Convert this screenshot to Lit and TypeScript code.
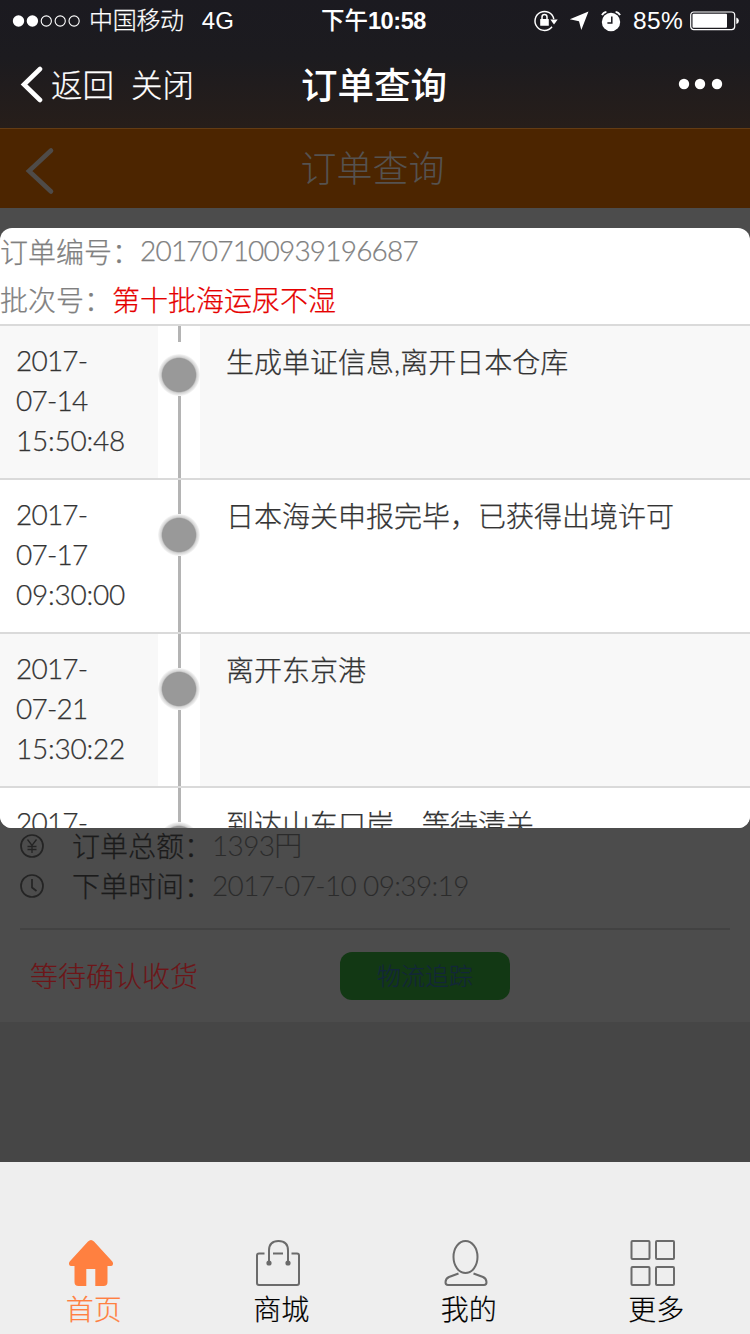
import { LitElement, html, css, svg } from "lit";
import { customElement, property } from "lit/decorators.js";

interface TrackEvent {
  date: string[];
  text: string;
}

const EVENTS: TrackEvent[] = [
  { date: ["2017-", "07-14", "15:50:48"], text: "生成单证信息,离开日本仓库" },
  { date: ["2017-", "07-17", "09:30:00"], text: "日本海关申报完毕，已获得出境许可" },
  { date: ["2017-", "07-21", "15:30:22"], text: "离开东京港" },
  { date: ["2017-"], text: "到达山东口岸，等待清关" },
];

@customElement("status-bar")
class StatusBar extends LitElement {
  static styles = css`
    :host {
      display: grid;
      grid-template-columns: 1fr auto 1fr;
      align-items: center;
      height: 41px;
      color: #fff;
      font: 24px/40px "Liberation Sans", "Noto Sans CJK SC", sans-serif;
      white-space: nowrap;
    }
    .left, .right { display: flex; align-items: center; }
    .left { padding-left: 12px; }
    .signal { width: 70px; height: 14px; margin-right: 7px; }
    .carrier { font-weight: 300; letter-spacing: -0.3px; padding-top: 1px; -webkit-text-stroke: 0.25px; }
    .net { margin-left: 18px; }
    .time { font-weight: 500; font-size: 23.5px; margin-right: 3px; }
    .digits { font-weight: 700; letter-spacing: -0.4px; }
    .right { justify-content: flex-end; padding-right: 10px; }
    .lock { width: 26px; height: 24px; margin-right: 10px; }
    .arrow { width: 20px; height: 20px; margin-right: 11px; }
    .alarm { width: 22px; height: 22px; margin-right: 11px; }
    .pct { font-size: 24.5px; letter-spacing: 0.3px; }
    .battery { width: 50px; height: 20px; margin-left: 7px; }
  `;
  render() {
    return html`
      <div class="left">
        <svg class="signal" viewBox="0 0 70 14">
          ${[0, 1, 2, 3, 4].map((i) => svg`<circle cx=${6.5 + i * 13.9} cy="7" r=${i < 2 ? 5.7 : 5.1}
            fill=${i < 2 ? "#fff" : "none"} stroke="#fff" stroke-width=${i < 2 ? 0 : 1.1}/>`)}
        </svg>
        <span class="carrier">中国移动</span><span class="net">4G</span>
      </div>
      <div class="time">下午<span class="digits">10:58</span></div>
      <div class="right">
        <svg class="lock" viewBox="0 0 26 24" fill="none" stroke="#fff">
          <path d="M19 17.800A9.500 9.500 0 1 1 20.800 10" stroke-width="1.500"/>
          <path d="M17.300 10.500H24.700L21 15.500z" fill="#fff" stroke="none"/>
          <rect x="7.200" y="10" width="8.600" height="6.800" rx=".5" fill="#fff" stroke="none"/>
          <path d="M9 10.500V8a2.500 2.500 0 0 1 5 0V10.500" stroke-width="1.500"/>
        </svg>
        <svg class="arrow" viewBox="0 0 20 20"><path d="M19.500 .5 12.300 19 10 10.200 .8 8.200z" fill="#fff"/></svg>
        <svg class="alarm" viewBox="0 0 22 22" fill="none" stroke="#fff">
          <circle cx="11" cy="12" r="9.200" fill="#fff" stroke="none"/>
          <path d="M2 5.200Q3.200 2.200 6.400 1.800M20 5.200Q18.800 2.200 15.600 1.800" stroke-width="1.800"/>
          <path d="M11.800 6.500v6.400H7.400" stroke="#1b1a1f" stroke-width="1.500"/>
        </svg>
        <span class="pct">85%</span>
        <svg class="battery" viewBox="0 0 50 20">
          <rect x=".7" y="1" width="44" height="17.600" rx="3" fill="none" stroke="#fff" stroke-width="1.200"/>
          <rect x="2.500" y="2.800" width="34.500" height="14" rx="1" fill="#fff"/>
          <path d="M46.300 6.600q2.600.8 2.600 3.200t-2.600 3.200z" fill="#fff"/>
        </svg>
      </div>
    `;
  }
}

@customElement("nav-bar")
class NavBar extends LitElement {
  static styles = css`
    :host {
      display: grid;
      grid-template-columns: 1fr auto 1fr;
      align-items: center;
      height: 86px;
      color: #fff;
      font: 300 31.5px/48px "Liberation Sans", "Noto Sans CJK SC", sans-serif;
      white-space: nowrap;
    }
    .left { display: flex; align-items: center; gap: 17px; padding-left: 20px; -webkit-text-stroke: 0.25px; }
    .back { display: flex; align-items: center; gap: 7px; }
    .label { padding-top: 4px; }
    .chevron { width: 24px; height: 38px; }
    .title { padding: 5px 2px 0 0; font-size: 36.5px; font-weight: 500; }
    .more { width: 46px; height: 12px; justify-self: end; margin-right: 27px; }
  `;
  render() {
    return html`
      <div class="left">
        <span class="back">
          <svg class="chevron" viewBox="0 0 24 38"><path d="M20 4 4 19.500l16 15.500" fill="none" stroke="#fff" stroke-width="4.600" stroke-linecap="round"/></svg>
          <span class="label">返回</span>
        </span>
        <span class="label">关闭</span>
      </div>
      <div class="title">订单查询</div>
      <svg class="more" viewBox="0 0 46 12" fill="#fff">
        <circle cx="7" cy="6" r="5.200"/><circle cx="23" cy="6" r="5.200"/><circle cx="40" cy="6" r="5.200"/>
      </svg>
    `;
  }
}

@customElement("track-row")
class TrackRow extends LitElement {
  @property({ attribute: false }) event!: TrackEvent;
  @property({ type: Boolean }) first = false;
  @property({ type: Boolean }) striped = false;
  static styles = css`
    :host { display: block; }
    .row {
      display: grid;
      grid-template-columns: 158px 42px 1fr;
      height: 152px;
      border-bottom: 2px solid #dadada;
      background: #fff;
      color: #333;
      -webkit-text-stroke: 0.25px;
    }
    .striped { background: #f8f8f8; }
    .date { padding: 14px 0 0 16px; letter-spacing: -0.8px; line-height: 40px; }
    .clock { letter-spacing: -0.25px; }
    .rail { display: flex; flex-direction: column; align-items: center; background: #fff; }
    .line { width: 3px; height: 34px; background: #b4b4b4; }
    .grow { flex: 1; }
    .first .line:first-child { height: 16px; margin-bottom: 12px; }
    .dot {
      width: 42px;
      height: 42px;
      border-radius: 50%;
      background: radial-gradient(circle closest-side, #999 79%, #d2d2d2 85%, #e4e4e4 92%, #f8f8f8 100%);
    }
    .text { padding: 16px 0 0 26px; line-height: 40px; white-space: nowrap; }
  `;
  render() {
    return html`
      <div class="row ${this.striped ? "striped" : ""} ${this.first ? "first" : ""}">
        <div class="date">${this.event.date.map((d) => html`<div class=${d.includes(":") ? "clock" : ""}>${d}</div>`)}</div>
        <div class="rail"><div class="line"></div><div class="dot"></div><div class="line grow"></div></div>
        <div class="text">${this.event.text}</div>
      </div>
    `;
  }
}

@customElement("tab-bar")
class TabBar extends LitElement {
  static styles = css`
    :host {
      display: grid;
      grid-template-columns: repeat(4, 1fr);
      height: 172px;
      background: #eee;
      color: #000;
      font: 300 28px/40px Lato, "Noto Sans CJK SC", sans-serif;
    }
    .tab { display: flex; flex-direction: column; align-items: center; padding-top: 77px; -webkit-text-stroke: 0.2px; }
    .active { color: #ff8040; }
    .icon { width: 46px; height: 48px; margin-right: 6px; margin-bottom: 2px; }
  `;
  render() {
    const line = "#6b6b6b";
    const tabs = [
      {
        label: "首页",
        icon: svg`<path d="M23 1q1.500 0 3 1.500L44.300 22.500q1 1.500.6 2.900-.4 1.600-2.200 1.600H39.500V43q0 4-4 4H27.300V30H18.300V47H10.500q-4 0-4-4V27H3.300Q1.500 27 1.100 25.400.7 24 1.700 22.500L20 2.500Q21.500 1 23 1z" fill="#ff8040"/>`,
      },
      {
        label: "商城",
        icon: svg`<g fill="none" stroke=${line} stroke-width="2"><path d="M9.500 14.500H4q-2 0-2 2V44q0 2 2 2H42q2 0 2-2V16.500q0-2-2-2H36.500M18 14.500H28"/><path d="M14 23.500V11.500Q14 2 23.500 2T33 11.500V23.500"/><circle cx="14" cy="24" r="1.600" fill=${line}/><circle cx="33" cy="24" r="1.600" fill=${line}/></g>`,
      },
      {
        label: "我的",
        icon: svg`<g fill="none" stroke=${line} stroke-width="2"><ellipse cx="22.500" cy="18" rx="12" ry="16"/><path d="M15.500 34.500 6 38Q2.500 39.700 2.500 43.200 2.500 46 5 46H41Q43.500 46 43.500 43.200 43.500 39.700 40 38L30.500 34.500"/></g>`,
      },
      {
        label: "更多",
        icon: svg`<g fill="none" stroke=${line} stroke-width="2"><rect x="1.500" y="2" width="18" height="18" rx="1"/><rect x="26" y="2" width="18" height="18" rx="1"/><rect x="1.500" y="28" width="18" height="18" rx="1"/><rect x="26" y="28" width="18" height="18" rx="1"/></g>`,
      },
    ];
    return html`${tabs.map(
      (t, i) => html`<div class="tab ${i === 0 ? "active" : ""}">
        <svg class="icon" viewBox="0 0 46 48">${t.icon}</svg><span>${t.label}</span>
      </div>`
    )}`;
  }
}

@customElement("app-root")
class AppRoot extends LitElement {
  static styles = css`
    :host {
      display: flex;
      flex-direction: column;
      position: relative;
      width: 750px;
      height: 1334px;
      overflow: hidden;
      background: #464646;
      font: 300 28px/40px Lato, "Noto Sans CJK SC", sans-serif;
    }
    .top {
      box-sizing: border-box;
      height: 129px;
      background: linear-gradient(#1b1a20 0%, #1c1b1f 45%, #271e1a 100%);
      border-bottom: 1px solid #643c14;
    }
    .header {
      display: grid;
      grid-template-columns: 1fr auto 1fr;
      align-items: center;
      height: 79px;
      background: #4c2500;
      color: #555250;
      font-size: 36px;
    }
    .title { padding: 0 5px 1px 0; }
    .back { width: 30px; height: 50px; margin: 4px 0 0 25px; }
    .card {
      display: flex;
      flex-direction: column;
      justify-content: flex-end;
      box-sizing: border-box;
      height: 814px;
      background: #4c4c4c;
    }
    .info { display: flex; align-items: center; height: 40px; padding-left: 20px; color: #1b1b1b; white-space: nowrap; -webkit-text-stroke: 0.25px; }
    .info svg { width: 24px; height: 24px; margin-right: 28px; }
    .label { width: 140px; }
    .value { margin-top: -3px; color: #2b2b2b; letter-spacing: -0.65px; -webkit-text-stroke: 0; }
    .actions {
      display: grid;
      grid-template-columns: 320px 170px;
      align-items: center;
      height: 92px;
      margin: 22px 20px 0;
      border-top: 2px solid #424242;
    }
    .state { padding-left: 10px; color: #6e1518; -webkit-text-stroke: 0.15px; }
    .track {
      height: 48px;
      border-radius: 12px;
      background: #123814;
      color: #12263a;
      font-size: 24px;
      line-height: 48px;
      text-align: center;
      -webkit-text-stroke: 0.2px;
    }
    .rest { flex: 1; }
    .modal {
      position: absolute;
      top: 228px;
      left: 0;
      width: 750px;
      height: 600px;
      overflow: hidden;
      border-radius: 12px;
      background: #fff;
    }
    .head {
      box-sizing: border-box;
      height: 98px;
      border-bottom: 2px solid #dadada;
      color: #808080;
      line-height: 48px;
      white-space: nowrap;
      -webkit-text-stroke: 0.25px;
    }
    .line { display: flex; height: 48px; }
    .num { margin-top: -2px; letter-spacing: -0.8px; }
    .batch { color: #e60000; }
  `;
  render() {
    return html`
      <div class="top"><status-bar></status-bar><nav-bar></nav-bar></div>
      <div class="header">
        <svg class="back" viewBox="0 0 30 50"><path d="M26 4.500 4 25 26 45.500" fill="none" stroke="#4f4b48" stroke-width="4.600" stroke-linecap="round"/></svg>
        <div class="title">订单查询</div>
      </div>
      <div class="card">
        <div class="info">
          <svg viewBox="0 0 24 24" fill="none" stroke="#242424" stroke-width="1.700"><circle cx="12" cy="12" r="11"/><path d="M7.500 5.500 12 11.500 16.500 5.500M12 11.500V19M7.500 12.500H16.500M7.500 15.500H16.500" stroke-width="1.300"/></svg>
          <span class="label">订单总额：</span><span class="value">1393円</span>
        </div>
        <div class="info">
          <svg viewBox="0 0 24 24" fill="none" stroke="#242424" stroke-width="1.700"><circle cx="12" cy="12" r="11"/><path d="M12 5V13.500L16.500 17"/></svg>
          <span class="label">下单时间：</span><span class="value">2017-07-10 09:39:19</span>
        </div>
        <div class="actions"><span class="state">等待确认收货</span><div class="track">物流追踪</div></div>
      </div>
      <div class="rest"></div>
      <tab-bar></tab-bar>
      <div class="modal">
        <div class="head">
          <div class="line">订单编号：<span class="num">201707100939196687</span></div>
          <div class="line">批次号：<span class="batch">第十批海运尿不湿</span></div>
        </div>
        ${EVENTS.map((e, i) => html`<track-row .event=${e} ?first=${i === 0} ?striped=${i % 2 === 0}></track-row>`)}
      </div>
    `;
  }
}
